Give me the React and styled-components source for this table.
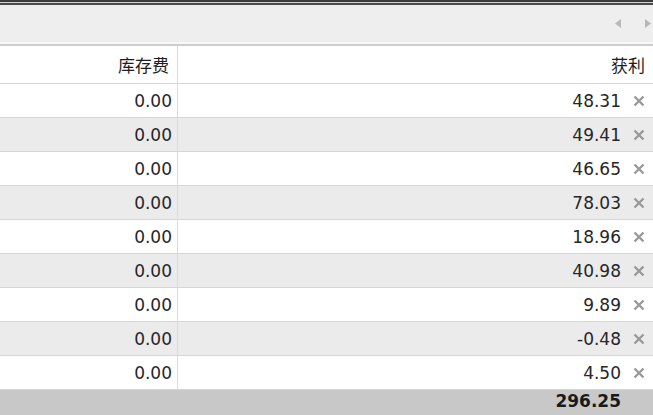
import React from 'react';
import styled, { createGlobalStyle } from 'styled-components';

const GlobalStyle = createGlobalStyle`
    html, body {
        margin: 0;
        padding: 0;
        background: #ffffff;
    }
    body {
        font-family: "DejaVu Sans", "Noto Sans CJK SC", sans-serif;
        color: #222;
    }
`;

const Frame = styled.div`
    width: 653px;
    height: 415px;
    overflow: hidden;
    display: flex;
    flex-direction: column;
    background: #fff;
`;

const TopEdge = styled.div`
    height: 1px;
    border-top: 2px solid #3c3c3c;
    border-bottom: 2px solid #4a4a4a;
    background: #cfcfcf;
`;

const Toolbar = styled.div`
    height: 39px;
    background: #eeeeee;
    border-bottom: 2px solid #cdcdcd;
    display: flex;
    align-items: center;
    justify-content: flex-end;
    gap: 22px;
    padding-right: 2px;
    box-shadow: inset 0 -2px 0 #f7f7f7;
`;

const Arrow = styled.svg`
    width: 7px;
    height: 9px;
    margin-top: -2px;
    fill: #b8b8b8;
`;

const Grid = styled.div`
    display: grid;
    grid-template-columns: 178px 1fr;
`;

const Cell = styled.div`
    height: ${({ $header }) => ($header ? 37 : 33)}px;
    display: flex;
    align-items: center;
    justify-content: flex-end;
    gap: 12px;
    padding-right: ${({ $right }) => ($right ? 8 : 5)}px;
    background: ${({ $alt }) => ($alt ? '#ebebeb' : '#ffffff')};
    border-bottom: 1px solid #d6d6d6;
    border-right: ${({ $right }) => ($right ? 'none' : '1px solid #dcdcdc')};
    font-size: 17px;
`;

const HeaderText = styled.span`
    font-family: "Noto Sans CJK SC", sans-serif;
    font-size: 17px;
    color: #1e1e1e;
    padding-right: ${({ $pad }) => $pad}px;
`;

const Num = styled.span`
    color: #262626;
`;

const Close = styled.svg`
    width: 12px;
    height: 12px;
    stroke: #9a9a9a;
    stroke-width: 2.4;
`;

const TotalRow = styled.div`
    flex: 1;
    display: grid;
    grid-template-columns: 178px 1fr;
    background: #c8c8c8;
`;

const TotalCell = styled.div`
    display: flex;
    justify-content: flex-end;
    align-items: flex-start;
    padding-top: 1px;
    padding-right: 32px;
    font-weight: bold;
    font-size: 17px;
    color: #1a1a1a;
`;

const rows = ['48.31', '49.41', '46.65', '78.03', '18.96', '40.98', '9.89', '-0.48', '4.50'];

const App = () => (
    <Frame>
        <GlobalStyle />
        <TopEdge />
        <Toolbar>
            <Arrow viewBox="0 0 7 9"><path d="M6 0 L0 4.5 L6 9 Z" /></Arrow>
            <Arrow viewBox="0 0 7 9"><path d="M1 0 L7 4.5 L1 9 Z" /></Arrow>
        </Toolbar>
        <Grid>
            <Cell $header><HeaderText $pad={3}>库存费</HeaderText></Cell>
            <Cell $header $right><HeaderText $pad={-5}>获利</HeaderText></Cell>
            {rows.map((v, i) => (
                <React.Fragment key={i}>
                    <Cell $alt={i % 2 === 1}><Num>0.00</Num></Cell>
                    <Cell $alt={i % 2 === 1} $right>
                        <Num>{v}</Num>
                        <Close viewBox="0 0 12 12"><path d="M1.5 1.5 L10.5 10.5 M10.5 1.5 L1.5 10.5" /></Close>
                    </Cell>
                </React.Fragment>
            ))}
        </Grid>
        <TotalRow>
            <div />
            <TotalCell>296.25</TotalCell>
        </TotalRow>
    </Frame>
);

export default App;
